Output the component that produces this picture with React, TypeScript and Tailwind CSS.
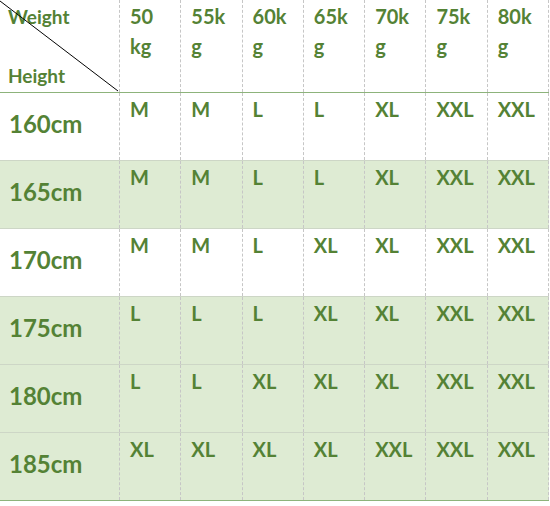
const WEIGHTS = ["50", "55k", "60k", "65k", "70k", "75k", "80k"];
const WEIGHTS_2 = ["kg", "g", "g", "g", "g", "g", "g"];

const ROWS: { height: string; sizes: string[]; shaded: boolean }[] = [
  { height: "160cm", sizes: ["M", "M", "L", "L", "XL", "XXL", "XXL"], shaded: false },
  { height: "165cm", sizes: ["M", "M", "L", "L", "XL", "XXL", "XXL"], shaded: true },
  { height: "170cm", sizes: ["M", "M", "L", "XL", "XL", "XXL", "XXL"], shaded: false },
  { height: "175cm", sizes: ["L", "L", "L", "XL", "XL", "XXL", "XXL"], shaded: true },
  { height: "180cm", sizes: ["L", "L", "XL", "XL", "XL", "XXL", "XXL"], shaded: true },
  { height: "185cm", sizes: ["XL", "XL", "XL", "XL", "XXL", "XXL", "XXL"], shaded: true },
];

const font = { fontFamily: "Lato, 'Liberation Sans', sans-serif" };

export default function App() {
  return (
    <div className="h-[506px] w-[550px] bg-white font-bold text-[#548235]" style={font}>
      <div className="w-[549px]">
        <div className="grid h-[93px] grid-cols-[120px_repeat(7,1fr)] border-b border-[#8db37b]">
          <div className="relative border-r border-dashed border-[#c6c6c6] pl-[8px] text-[19px] leading-none">
            <svg className="absolute inset-0 h-full w-full" preserveAspectRatio="none" viewBox="0 0 120 92">
              <line x1="0" y1="1" x2="119" y2="91" stroke="#000" strokeWidth="1" />
            </svg>
            <div className="pt-[7px]">Weight</div>
            <div className="pt-[40px]">Height</div>
          </div>
          {WEIGHTS.map((w, i) => (
            <div
              key={w}
              className="border-r border-dashed border-[#c6c6c6] pl-[10px] pt-[1px] text-[20px] leading-[30px]"
            >
              {w}
              <br />
              {WEIGHTS_2[i]}
            </div>
          ))}
        </div>

        {ROWS.map((row, r) => (
          <div
            key={row.height}
            className={`grid h-[68px] grid-cols-[120px_repeat(7,1fr)] border-b ${
              r === ROWS.length - 1 ? "border-[#8db37b]" : "border-[#cdd6c6]"
            } ${row.shaded ? "bg-[#deebd3]" : "bg-white"}`}
          >
            <div className="flex items-center border-r border-dashed border-[#c6c6c6] pb-[6px] pl-[9px] text-[24px]">
              {row.height}
            </div>
            {row.sizes.map((s, i) => (
              <div
                key={i}
                className="border-r border-dashed border-[#c6c6c6] pl-[10px] pt-[1px] text-[20px] leading-[30px]"
              >
                {s}
              </div>
            ))}
          </div>
        ))}
      </div>
    </div>
  );
}
